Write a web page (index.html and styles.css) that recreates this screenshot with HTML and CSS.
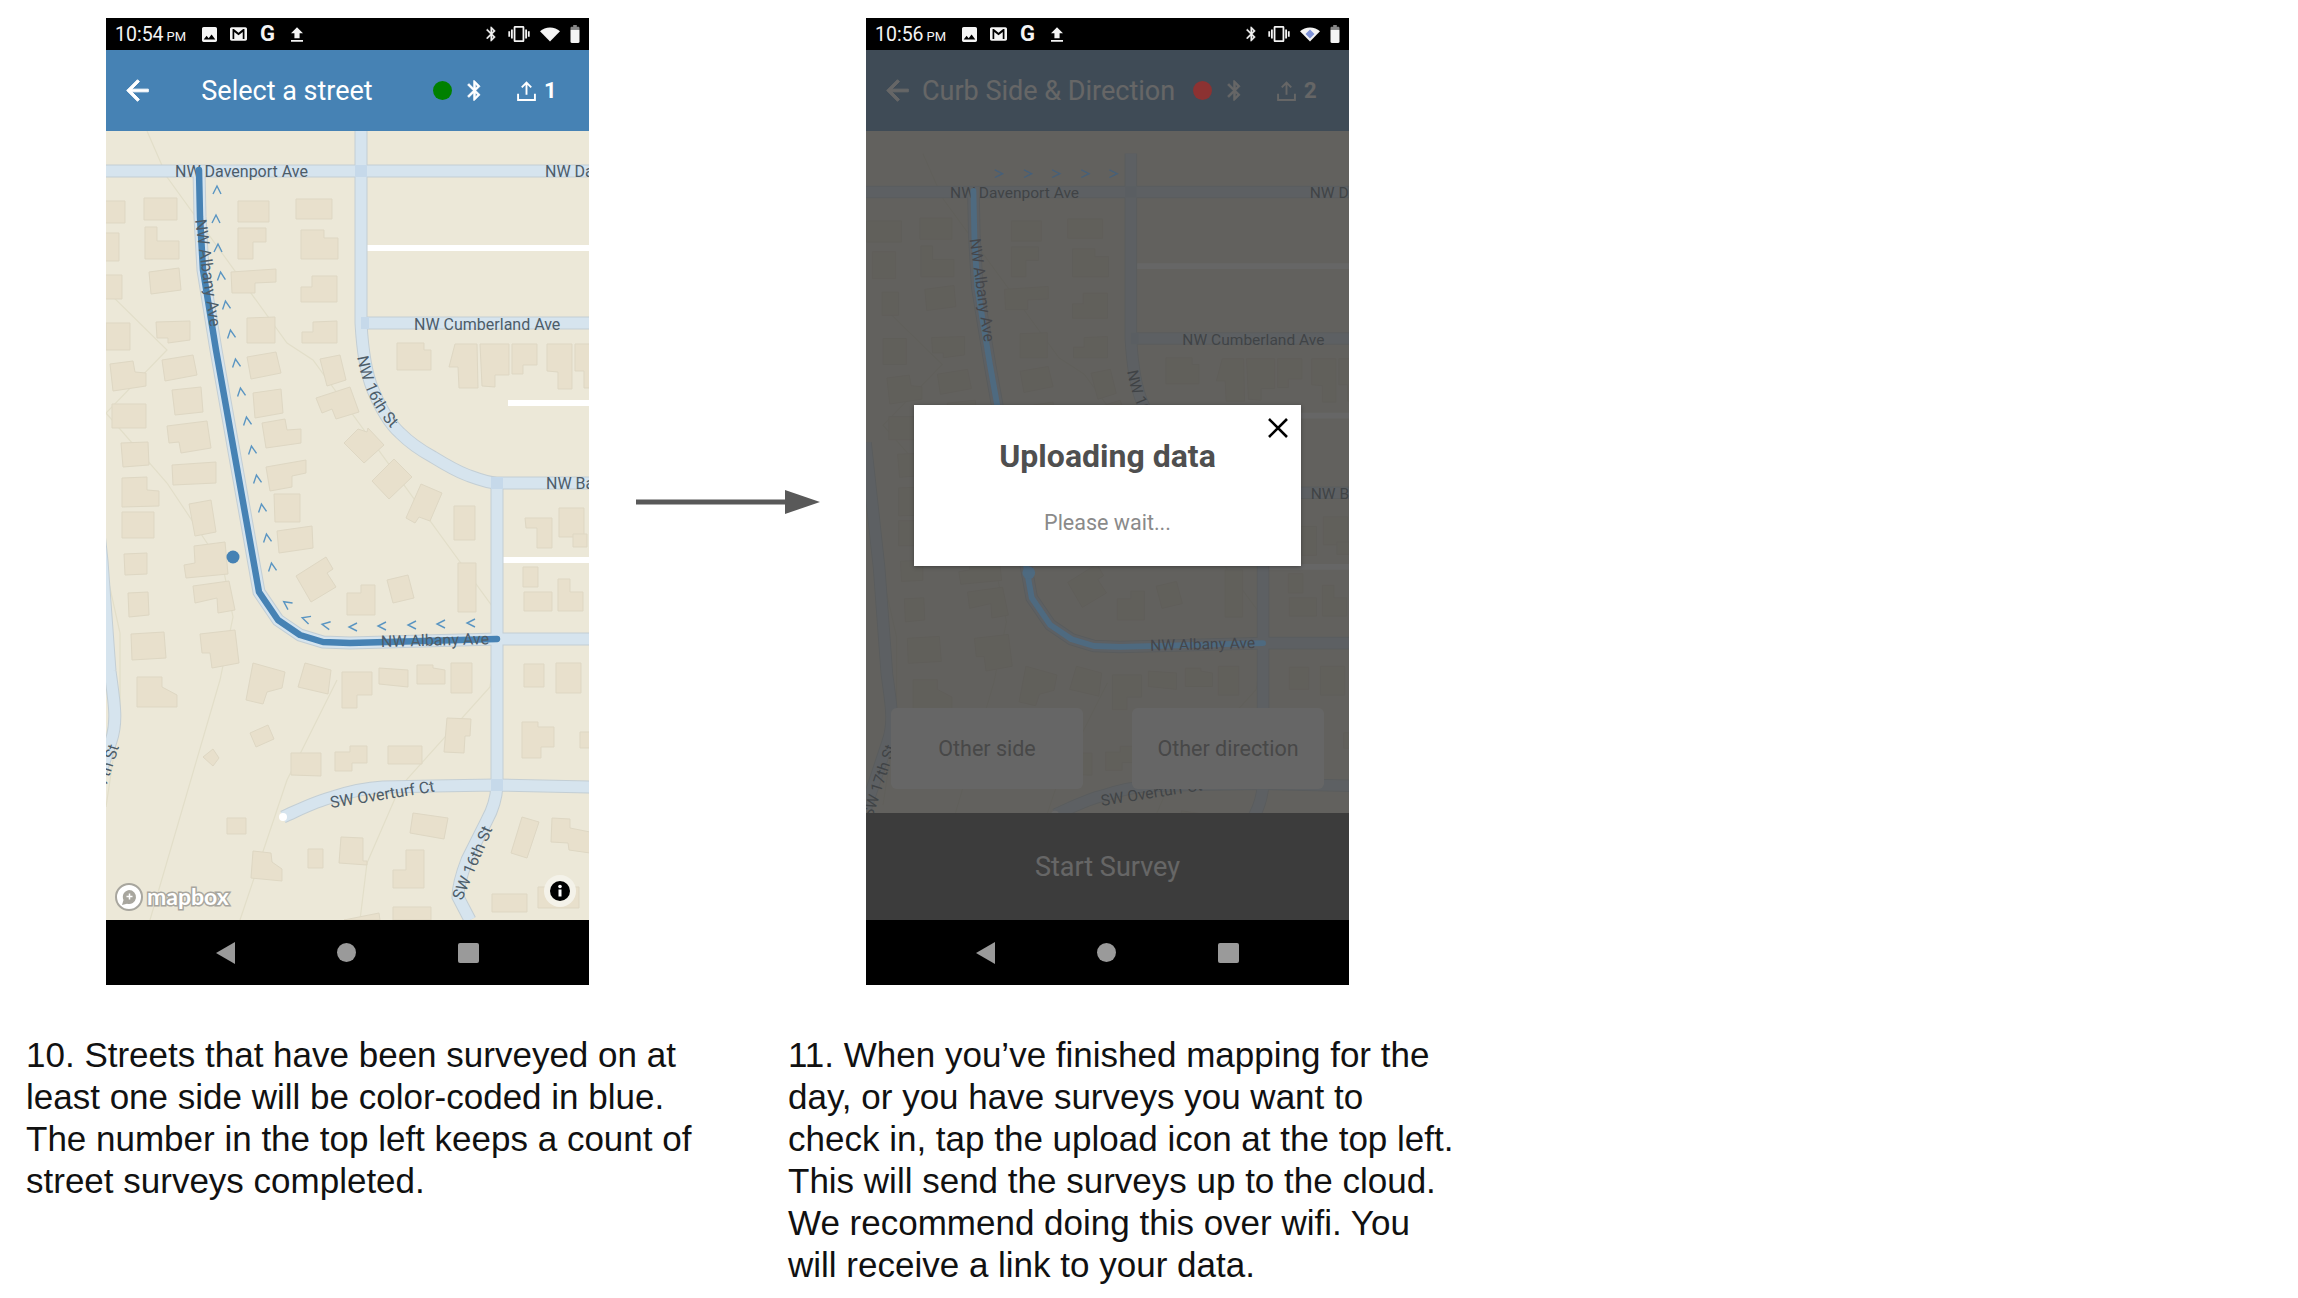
FILE: index.html

```html
<!DOCTYPE html>
<html>
<head>
  <meta charset="UTF-8">
  <title>Survey steps 10 and 11</title>
  <meta name="viewport" content="width=device-width, initial-scale=1.0">
  <link rel="stylesheet" href="styles.css">
</head>
<body>

<!-- icons and the shared street map -->
<svg class="sprite" aria-hidden="true">
  <defs>
    <symbol id="i-image" viewBox="3 3 18 18"><path d="M21 19V5c0-1.100-.9-2-2-2H5c-1.100 0-2 .9-2 2v14c0 1.100.9 2 2 2h14c1.100 0 2-.9 2-2zM8.500 13.500l2.500 3.010L14.500 12l4.500 6H5l3.500-4.500z" fill-rule="evenodd"/></symbol>
    <symbol id="i-mail" viewBox="2 4 20 16"><path d="M20 4H4C2.900 4 2 4.900 2 6v12c0 1.100.9 2 2 2h16c1.100 0 2-.9 2-2V6c0-1.100-.9-2-2-2zm-1 14h-2V9.500l-5 4-5-4V18H5V6h1.500l5.500 4.500L17.500 6H19v12z" fill-rule="evenodd"/></symbol>
    <symbol id="i-upload" viewBox="5 3 14 17"><path d="M9 16h6v-6h4l-7-7-7 7h4zm-4 2h14v2H5z"/></symbol>
    <symbol id="i-bt" viewBox="4.500 1.500 14 21"><path d="M17.710 7.710L12 2h-1v7.590L6.410 5 5 6.410 10.590 12 5 17.590 6.410 19 11 14.410V22h1l5.710-5.710-4.300-4.290 4.300-4.290zM13 5.830l1.880 1.880L13 9.590V5.830zm1.880 10.460L13 18.170v-3.760l1.880 1.880z" stroke="currentColor" stroke-width=".5"/></symbol>
    <symbol id="i-vibrate" viewBox="0 3 24 18"><path d="M0 15h2V9H0v6zm3 2h2V7H3v10zm19-8v6h2V9h-2zm-3 8h2V7h-2v10zM16.500 3h-9C6.670 3 6 3.670 6 4.500v15c0 .83.67 1.500 1.500 1.500h9c.83 0 1.500-.67 1.500-1.500v-15c0-.83-.67-1.500-1.500-1.500zM16 19H8V5h8v14z"/></symbol>
    <symbol id="i-wifi" viewBox="0 3 24 17"><path d="M12 20L0 7.500C3 4.800 7.500 3 12 3s9 1.800 12 4.500z"/></symbol>
    <symbol id="i-battery" viewBox="7 2 10 20"><path d="M15.670 4H14V2h-4v2H8.330C7.600 4 7 4.600 7 5.330v15.340C7 21.400 7.600 22 8.330 22h7.340c.74 0 1.330-.6 1.330-1.330V5.330C17 4.600 16.400 4 15.670 4z"/><rect x="6" y="1" width="12" height="6.500" fill="#000" opacity=".45"/></symbol>
    <symbol id="i-back" viewBox="3.500 3.500 17 17"><path d="M20 11H7.830l5.590-5.590L12 4l-8 8 8 8 1.410-1.410L7.830 13H20v-2z" stroke="currentColor" stroke-width=".7"/></symbol>
    <symbol id="i-tray" viewBox="3 2 18 19"><path d="M12 15V3.500M7.500 8 12 3.500 16.500 8M4 14v6h16v-6" fill="none" stroke="currentColor" stroke-width="1.800"/></symbol>

    <path id="route-line" d="M93 39 94 86 97 139 110 219 153 461 172 489 194 504 217 511 244 512 391 508"/>
    <path id="chev" d="M-4 4 0-4 4 4" fill="none" stroke-width="1.400"/>
    <path id="label-16th" d="M251 226C256 255 270 285 294 306"/>

    <g id="albany-labels">
      <text transform="translate(275 516) rotate(-1.500)">NW Albany Ave</text>
      <text transform="translate(89 89) rotate(82)">NW Albany Ave</text>
    </g>

    <g id="street-map">
      <rect class="land" x="-30" y="-30" width="560" height="860"/>

      <g class="contours">
        <path d="M41 0 61 46 181 212 207 229 394 486 384 556 294 656 261 732 254 789"/>
        <path d="M0 159 61 219 0 282 61 352 117 436 127 486 114 549 44 789"/>
        <path d="M231 549 181 649 134 789"/>
        <path d="M0 439 14 502 14 582 0 676"/>
      </g>

      <g class="bldg">
        <polygon points="-17,70 19,70 19,92 -17,92"/>
        <polygon points="38,67 71,67 71,89 38,89"/>
        <polygon points="132,70 163,70 163,91 132,91"/>
        <polygon points="190,68 226,68 226,88 190,88"/>
        <polygon points="-11,102 13,102 13,130 -11,130"/>
        <polygon points="39,96 51,96 51,110 73,110 73,128 39,128"/>
        <polygon points="132,97 160,97 160,111 147,111 147,128 132,128"/>
        <polygon points="195,99 218,99 218,107 232,107 232,128 195,128"/>
        <polygon points="-1,144 16,144 16,168 -1,168"/>
        <polygon points="43,141 73,137 75,159 45,163"/>
        <polygon points="125,141 170,138 170,151 149,152 149,162 126,162"/>
        <polygon points="206,145 231,145 231,171 195,171 195,156 206,156"/>
        <polygon points="0,192 24,192 24,219 0,219"/>
        <polygon points="50,191 84,190 84,209 62,212 62,207 51,207"/>
        <polygon points="141,187 169,186 169,212 141,212"/>
        <polygon points="207,191 231,190 231,212 196,212 196,201 207,201"/>
        <polygon points="291,212 318,212 318,219 325,219 325,239 291,239"/>
        <polygon points="349,213 371,213 372,257 353,257 352,236 343,236"/>
        <polygon points="374,213 403,213 403,244 389,244 389,256 376,255"/>
        <polygon points="406,213 431,213 431,234 417,234 417,243 406,243"/>
        <polygon points="441,213 466,213 466,258 452,258 452,241 441,240"/>
        <polygon points="469,213 484,213 484,257 478,257 478,240 469,240"/>
        <polygon points="4,233 27,230 29,241 40,242 40,255 7,260"/>
        <polygon points="56,229 87,224 91,244 59,250"/>
        <polygon points="141,226 170,221 175,242 145,248"/>
        <polygon points="214,228 234,224 240,249 221,255"/>
        <polygon points="66,259 95,256 97,281 69,284"/>
        <polygon points="147,262 175,258 177,282 149,287"/>
        <polygon points="210,267 244,256 253,281 230,288 226,278 216,282"/>
        <polygon points="6,273 40,273 40,297 6,297"/>
        <polygon points="156,292 179,288 181,299 195,298 195,312 160,317"/>
        <polygon points="61,295 101,290 105,317 75,322 73,311 63,312"/>
        <polygon points="238,312 252,298 261,301 262,297 278,314 258,332"/>
        <polygon points="15,312 42,311 43,334 17,336"/>
        <polygon points="266,350 288,328 306,346 283,368"/>
        <polygon points="66,334 110,331 110,352 67,354"/>
        <polygon points="160,336 200,329 200,342 186,345 186,356 164,360"/>
        <polygon points="16,347 41,346 41,359 53,360 53,375 16,376"/>
        <polygon points="83,373 105,369 110,401 89,405"/>
        <polygon points="168,363 194,363 194,391 169,391"/>
        <polygon points="315,353 336,362 324,390 313,386 309,392 300,387"/>
        <polygon points="348,375 369,375 369,409 348,409"/>
        <polygon points="419,387 446,387 446,417 431,417 431,397 420,397"/>
        <polygon points="453,377 478,377 478,406 453,406"/>
        <polygon points="467,403 481,403 481,416 467,416"/>
        <polygon points="16,381 48,381 48,407 16,407"/>
        <polygon points="171,400 206,395 207,417 173,422"/>
        <polygon points="88,415 119,411 122,443 80,447 78,434 89,432"/>
        <polygon points="18,423 41,422 41,443 19,444"/>
        <polygon points="190,445 220,426 227,438 221,442 230,456 205,471"/>
        <polygon points="417,436 432,436 432,456 417,456"/>
        <polygon points="452,448 464,448 464,461 477,461 477,480 452,480"/>
        <polygon points="418,461 446,461 446,480 418,480"/>
        <polygon points="352,432 370,432 370,481 352,481"/>
        <polygon points="281,449 302,444 308,467 287,472"/>
        <polygon points="241,462 255,462 255,454 269,454 269,484 241,484"/>
        <polygon points="87,455 123,450 129,479 112,482 111,467 89,472"/>
        <polygon points="22,462 42,461 43,484 23,486"/>
        <polygon points="25,503 58,501 60,527 26,529"/>
        <polygon points="94,503 129,499 133,532 106,537 104,522 96,522"/>
        <polygon points="147,532 179,541 176,557 161,561 157,573 140,569"/>
        <polygon points="199,532 225,539 222,563 192,556"/>
        <polygon points="236,541 266,541 266,564 251,564 251,577 236,577"/>
        <polygon points="273,537 302,539 302,556 273,553"/>
        <polygon points="311,534 327,534 327,537 339,539 339,553 311,553"/>
        <polygon points="345,532 366,532 366,562 345,562"/>
        <polygon points="418,533 438,533 438,556 418,556"/>
        <polygon points="450,532 475,532 475,562 450,562"/>
        <polygon points="31,546 56,546 56,556 71,564 71,576 31,576"/>
        <polygon points="144,602 162,594 168,608 150,616"/>
        <polygon points="97,626 107,618 113,627 107,635"/>
        <polygon points="185,622 215,622 215,645 185,644"/>
        <polygon points="229,621 244,621 244,615 261,615 261,632 246,632 246,640 229,640"/>
        <polygon points="282,615 316,615 316,633 282,633"/>
        <polygon points="341,587 365,588 364,605 359,605 358,622 338,621"/>
        <polygon points="416,591 432,591 432,596 448,596 448,616 435,616 435,627 416,627"/>
        <polygon points="474,601 484,601 484,617 474,617"/>
        <polygon points="121,687 140,687 140,703 121,703"/>
        <polygon points="307,682 342,687 338,708 304,702"/>
        <polygon points="416,686 433,691 421,727 405,722"/>
        <polygon points="446,687 464,688 464,697 484,701 484,722 463,719 462,712 445,711"/>
        <polygon points="147,720 165,722 166,731 176,738 176,750 145,747"/>
        <polygon points="202,718 217,718 217,737 202,737"/>
        <polygon points="235,706 257,707 257,730 261,730 261,734 233,732"/>
        <polygon points="300,719 318,719 318,757 287,757 287,739 300,739"/>
        <polygon points="386,763 421,763 421,781 386,781"/>
        <polygon points="432,756 473,756 473,777 432,777"/>
        <polygon points="287,776 325,776 325,789 287,789"/>
        <polygon points="238,789 273,782 274,789"/>
      </g>

      <g class="white-road">
        <path d="M261 117H484"/>
        <path d="M402 272H484"/>
        <path d="M396 429H484"/>
      </g>

      <g class="road-edge">
        <path id="road-a" d="M-30 40H484"/>
        <path id="road-b" d="M255 0V192C256 210 259 240 267 259 274 276 283 292 294 302 306 314 316 320 327 326 340 334 350 340 361 344 372 348 382 352 391 352H484"/>
        <path id="road-c" d="M255 192H484"/>
        <path id="road-d" d="M391 352V655C390 670 386 680 381 689L361 729C356 742 352 755 352 766L364 789"/>
        <path id="road-e" d="M391 508H484"/>
        <path id="road-f" d="M177 686C195 678 210 670 227 666 245 660 260 657 277 656L327 655 390 654 484 656"/>
        <path id="road-g" d="M-18 300-4 430 4 540C8 570 12 590 5 610L-18 680"/>
        <use href="#route-line"/>
      </g>
      <g class="road-fill">
        <use href="#road-a"/>
        <use href="#road-b"/>
        <use href="#road-c"/>
        <use href="#road-d"/>
        <use href="#road-e"/>
        <use href="#road-f"/>
        <use href="#road-g"/>
        <use href="#route-line"/>
      </g>
      <circle class="road-cap" cx="177" cy="686" r="4"/>
      <g class="junction">
        <rect x="249" y="34" width="12" height="12"/>
        <rect x="385" y="346" width="12" height="12"/>
        <rect x="385" y="648" width="12" height="12"/>
        <rect x="255" y="186" width="8" height="12"/>
      </g>

      <g class="map-label">
        <text x="69" y="46">NW Davenport Ave</text>
        <text x="439" y="46">NW Davenport Ave</text>
        <text x="308" y="199">NW Cumberland Ave</text>
        <text x="440" y="358">NW Barnes Rd</text>
        <text><textPath href="#label-16th">NW 16th St</textPath></text>
        <text transform="translate(225 677) rotate(-9)">SW Overturf Ct</text>
        <text transform="translate(356 770) rotate(-67)">SW 16th St</text>
        <text transform="translate(-11 690) rotate(-72)">SW 17th St</text>
      </g>
    </g>
  </defs>
</svg>

<main class="slide">
  <div class="phones">

    <section class="phone">
      <div class="status">
        <span class="clock">10:54<small>PM</small></span>
        <svg class="st-icon st-image"><use href="#i-image"/></svg>
        <svg class="st-icon st-mail"><use href="#i-mail"/></svg>
        <span class="st-g">G</span>
        <svg class="st-icon st-upload"><use href="#i-upload"/></svg>
        <span class="st-right">
          <svg class="st-icon st-bt"><use href="#i-bt"/></svg>
          <svg class="st-icon st-vibrate"><use href="#i-vibrate"/></svg>
          <svg class="st-icon st-wifi"><use href="#i-wifi"/></svg>
          <svg class="st-icon st-battery"><use href="#i-battery"/></svg>
        </span>
      </div>
      <div class="phone-body">
        <header class="appbar">
          <svg class="bar-back"><use href="#i-back"/></svg>
          <h1 class="bar-title">Select a street</h1>
          <span class="bar-dot dot-green"></span>
          <svg class="bar-bt"><use href="#i-bt"/></svg>
          <svg class="bar-tray"><use href="#i-tray"/></svg>
          <span class="bar-count">1</span>
        </header>
        <div class="map">
          <svg class="map-svg" viewBox="0 0 484 789" width="484" height="789">
            <use href="#street-map"/>
            <use class="route" href="#route-line"/>
            <use class="map-label" href="#albany-labels"/>
            <g class="chevrons">
              <use href="#chev" transform="translate(111 59)"/>
              <use href="#chev" transform="translate(110 88)"/>
              <use href="#chev" transform="translate(112 117)"/>
              <use href="#chev" transform="translate(115 145) rotate(-6)"/>
              <use href="#chev" transform="translate(120 174) rotate(-8)"/>
              <use href="#chev" transform="translate(125 203) rotate(-8)"/>
              <use href="#chev" transform="translate(130 232) rotate(-8)"/>
              <use href="#chev" transform="translate(135 261) rotate(-8)"/>
              <use href="#chev" transform="translate(141 290) rotate(-8)"/>
              <use href="#chev" transform="translate(146 319) rotate(-8)"/>
              <use href="#chev" transform="translate(151 348) rotate(-8)"/>
              <use href="#chev" transform="translate(156 377) rotate(-8)"/>
              <use href="#chev" transform="translate(161 407) rotate(-8)"/>
              <use href="#chev" transform="translate(166 436) rotate(-8)"/>
              <use href="#chev" transform="translate(181 473) rotate(-55)"/>
              <use href="#chev" transform="translate(200 488) rotate(-72)"/>
              <use href="#chev" transform="translate(220 494) rotate(-80)"/>
              <use href="#chev" transform="translate(247 496) rotate(-90)"/>
              <use href="#chev" transform="translate(276 495) rotate(-90)"/>
              <use href="#chev" transform="translate(306 494) rotate(-90)"/>
              <use href="#chev" transform="translate(335 493) rotate(-90)"/>
              <use href="#chev" transform="translate(365 492) rotate(-90)"/>
            </g>
            <circle class="location" cx="127" cy="426" r="6.500"/>
            <g class="attribution">
              <circle class="mb-ring" cx="23" cy="766" r="13"/>
              <path class="mb-mark" d="M23 759a7 7 0 1 1-2 13.700L16 774l1.500-5A7 7 0 0 1 23 759z"/>
              <path class="mb-plus" d="M23.500 762.500v6M20.500 765.500h6"/>
              <text class="mb-word" x="41" y="774">mapbox</text>
              <circle class="info-halo" cx="454" cy="760" r="16"/>
              <circle class="info-disc" cx="454" cy="760" r="10"/>
              <rect class="info-i" x="452.500" y="758.500" width="3" height="7"/>
              <circle class="info-i" cx="454" cy="755.500" r="1.800"/>
            </g>
          </svg>
        </div>
      </div>
      <nav class="softkeys">
        <span class="key-back"></span>
        <span class="key-home"></span>
        <span class="key-recent"></span>
      </nav>
    </section>

    <svg class="next-arrow" viewBox="0 0 184 24" width="184" height="24">
      <path d="M0 12H152"/>
      <polygon points="149,0 184,12 149,24"/>
    </svg>

    <section class="phone">
      <div class="status">
        <span class="clock">10:56<small>PM</small></span>
        <svg class="st-icon st-image"><use href="#i-image"/></svg>
        <svg class="st-icon st-mail"><use href="#i-mail"/></svg>
        <span class="st-g">G</span>
        <svg class="st-icon st-upload"><use href="#i-upload"/></svg>
        <span class="st-right">
          <svg class="st-icon st-bt"><use href="#i-bt"/></svg>
          <svg class="st-icon st-vibrate"><use href="#i-vibrate"/></svg>
          <span class="wifi-active">
            <svg class="st-icon st-wifi"><use href="#i-wifi"/></svg>
          </span>
          <svg class="st-icon st-battery"><use href="#i-battery"/></svg>
        </span>
      </div>
      <div class="phone-body">
        <header class="appbar">
          <svg class="bar-back"><use href="#i-back"/></svg>
          <h1 class="bar-title">Curb Side &amp; Direction</h1>
          <span class="bar-dot dot-red"></span>
          <svg class="bar-bt"><use href="#i-bt"/></svg>
          <svg class="bar-tray"><use href="#i-tray"/></svg>
          <span class="bar-count">2</span>
        </header>
        <div class="map map-short">
          <svg class="map-svg" viewBox="0 0 484 682" width="484" height="682">
            <g transform="translate(17 22.400) scale(.972 .964)">
              <use href="#street-map"/>
            </g>
          </svg>
          <div class="side-buttons">
            <button class="side-btn">Other side</button>
            <button class="side-btn">Other direction</button>
          </div>
          <svg class="map-route" viewBox="0 0 484 682" width="484" height="682">
            <g transform="translate(17 22.400) scale(.972 .964)">
              <use class="route route-dim" href="#route-line"/>
              <use class="map-label label-dim" href="#albany-labels"/>
              <circle class="location-dim" cx="150" cy="435" r="6.500"/>
              <g class="chevrons chevrons-dim">
                <use href="#chev" transform="translate(119 21) rotate(90)"/>
                <use href="#chev" transform="translate(149 21) rotate(90)"/>
                <use href="#chev" transform="translate(178 21) rotate(90)"/>
                <use href="#chev" transform="translate(208 21) rotate(90)"/>
                <use href="#chev" transform="translate(237 21) rotate(90)"/>
              </g>
            </g>
          </svg>
        </div>
        <button class="start-btn">Start Survey</button>
        <div class="scrim"></div>
        <div class="dialog">
          <svg class="dialog-close" viewBox="0 0 20 20" width="20" height="20"><path d="M1 1 19 19M19 1 1 19"/></svg>
          <h2 class="dialog-title">Uploading data</h2>
          <p class="dialog-text">Please wait...</p>
        </div>
      </div>
      <nav class="softkeys">
        <span class="key-back"></span>
        <span class="key-home"></span>
        <span class="key-recent"></span>
      </nav>
    </section>

  </div>

  <div class="captions">
    <p class="caption caption-left">10. Streets that have been surveyed on at<br>least one side will be color-coded in blue.<br>The number in the top left keeps a count of<br>street surveys completed.</p>
    <p class="caption">11. When you’ve finished mapping for the<br>day, or you have surveys you want to<br>check in, tap the upload icon at the top left.<br>This will send the surveys up to the cloud.<br>We recommend doing this over wifi. You<br>will receive a link to your data.</p>
  </div>
</main>

</body>
</html>
```

FILE: styles.css

```css
body {
  margin: 0;
  background: #fff;
  font-family: "Liberation Sans", Arial, sans-serif;
}
.sprite { position: absolute; width: 0; height: 0; }

.slide { width: 2298px; height: 1298px; overflow: hidden; }
.phones { display: flex; align-items: center; padding: 18px 0 0 106px; }
.next-arrow { margin: 0 46px 0 47px; flex: none; }
.next-arrow path { stroke: #595959; stroke-width: 5; fill: none; }
.next-arrow polygon { fill: #595959; }

.phone { width: 483px; flex: none; font-family: Roboto, sans-serif; }

/* status bar */
.status {
  height: 32px;
  background: #000;
  color: #f4f4f4;
  display: flex;
  align-items: center;
  padding-left: 9px;
  fill: #f4f4f4;
}
.clock { font-size: 19.500px; width: 87px; flex: none; }
.clock small { font-size: 13px; margin-left: 3px; }
.st-icon { display: block; flex: none; }
.st-image { width: 15px; height: 15px; }
.st-mail { width: 17px; height: 14px; margin-left: 13px; }
.st-g { width: 17px; margin-left: 12px; font-size: 22px; font-weight: 700; line-height: 1; text-align: center; }
.st-upload { width: 12px; height: 15px; margin-left: 15px; }
.st-right { display: flex; align-items: center; margin-left: auto; padding-right: 8px; }
.st-bt { width: 10px; height: 16px; }
.st-vibrate { width: 22px; height: 16px; margin-left: 12px; }
.st-wifi { width: 20px; height: 15px; }
.wifi-active { position: relative; display: block; }
.wifi-active::after {
  content: "";
  position: absolute;
  left: 6px;
  top: 3px;
  width: 8px;
  height: 8px;
  background: #7f93d8;
  transform: rotate(45deg) scale(.8);
}
.st-right > .st-wifi, .wifi-active { margin-left: 10px; }
.st-battery { width: 12px; height: 18px; margin-left: 9px; }

/* app bar */
.phone-body { position: relative; }
.appbar {
  height: 81px;
  background: #4682b4;
  color: #fff;
  fill: #fff;
  display: flex;
  align-items: center;
  padding-left: 20px;
}
.bar-back { width: 23px; height: 23px; margin-right: 13px; flex: none; }
.bar-title {
  width: 250px;
  flex: none;
  margin: 0 21px 0 0;
  font-size: 27px;
  font-weight: 400;
  text-align: center;
  white-space: nowrap;
}
.bar-dot { width: 19px; height: 19px; border-radius: 50%; flex: none; }
.dot-green { background: #008000; }
.dot-red { background: #8c3232; position: relative; z-index: 2; }
.bar-bt { width: 14px; height: 23px; margin-left: 15px; flex: none; }
.bar-tray { width: 19px; height: 20px; margin-left: 36px; flex: none; color: #fff; }
.bar-count { margin-left: 8px; font-size: 22px; font-weight: 700; }

/* map */
.map { height: 789px; overflow: hidden; }
.map-short { height: 682px; position: relative; }
.map-svg { display: block; }
.land { fill: #ece8d8; }
.contours path { fill: none; stroke: #e2dec9; stroke-width: 1.200; }
.bldg polygon { fill: #e8e0cc; stroke: #ded7c3; stroke-width: 1; }
.white-road path { fill: none; stroke: #fff; stroke-width: 6; }
.road-edge { fill: none; stroke: #c3ced4; stroke-width: 13; }
.road-fill { fill: none; stroke: #d6e4ee; stroke-width: 11; }
.road-cap { fill: #fff; }
.junction rect { fill: #c6d9ea; }
.map-label { font-family: Roboto, sans-serif; font-size: 16px; fill: #4d5c68; }
.label-dim { fill: #45464a; }
.route { fill: none; stroke: #4682b4; stroke-width: 6.500; stroke-linecap: round; stroke-linejoin: round; }
.chevrons { stroke: #5a95c2; }
.location { fill: #4682b4; }
.mb-ring { fill: #fff; stroke: #a8a69e; stroke-width: 2; }
.mb-mark { fill: #a8a69e; }
.mb-plus { stroke: #fff; stroke-width: 1.500; fill: none; }
.mb-word {
  font-family: Lato, sans-serif;
  font-size: 23px;
  font-weight: 700;
  fill: #fff;
  stroke: #a8a69e;
  stroke-width: 3;
  paint-order: stroke;
}
.info-halo { fill: #f4f2e9; }
.info-disc { fill: #000; }
.info-i { fill: #fff; }

/* second phone, behind the dialog */
.side-buttons {
  position: absolute;
  left: 25px;
  right: 25px;
  bottom: 24px;
  display: flex;
  gap: 49px;
}
.side-btn {
  flex: 1;
  height: 81px;
  border: none;
  border-radius: 6px;
  background: #fff;
  color: #707070;
  font-family: Roboto, sans-serif;
  font-size: 21.500px;
}
.start-btn {
  display: block;
  width: 100%;
  height: 107px;
  border: none;
  background: #393939;
  color: #fff;
  font-family: Roboto, sans-serif;
  font-size: 27px;
}
.scrim {
  position: absolute;
  inset: 0;
  background: rgba(61, 61, 61, .79);
  z-index: 1;
}
.map-route { position: absolute; left: 0; top: 0; z-index: 2; }
.route-dim { stroke: #4e6a80; stroke-width: 6; }
.location-dim { fill: #4e6a80; }
.chevrons-dim { stroke: #46607a; stroke-width: 1.600; }

.dialog {
  position: absolute;
  left: 48px;
  top: 355px;
  width: 387px;
  height: 161px;
  background: #fff;
  box-shadow: 0 1px 4px rgba(0, 0, 0, .35);
  z-index: 3;
  text-align: center;
}
.dialog-close { position: absolute; right: 13px; top: 13px; }
.dialog-close path { stroke: #000; stroke-width: 2.600; fill: none; }
.dialog-title {
  margin: 31px 0 0;
  font-size: 32px;
  line-height: 40px;
  font-weight: 700;
  color: #4f4f4f;
}
.dialog-text {
  margin: 33px 0 0;
  font-size: 21.500px;
  line-height: 28px;
  color: #8a8a8a;
}

/* android keys */
.softkeys {
  height: 65px;
  background: #000;
  display: flex;
  align-items: center;
  justify-content: center;
  gap: 102px;
}
.key-back {
  width: 0;
  height: 0;
  border-style: solid;
  border-width: 11px 19px 11px 0;
  border-color: transparent #9a9a9a transparent transparent;
}
.key-home { width: 19px; height: 19px; border-radius: 50%; background: #9a9a9a; }
.key-recent { width: 21px; height: 20px; border-radius: 2px; background: #9a9a9a; }

/* captions */
.captions { display: flex; margin-top: 49px; padding-left: 26px; }
.caption {
  margin: 0;
  font-size: 35px;
  line-height: 42px;
  color: #111;
  white-space: nowrap;
}
.caption-left { width: 762px; flex: none; }
```
